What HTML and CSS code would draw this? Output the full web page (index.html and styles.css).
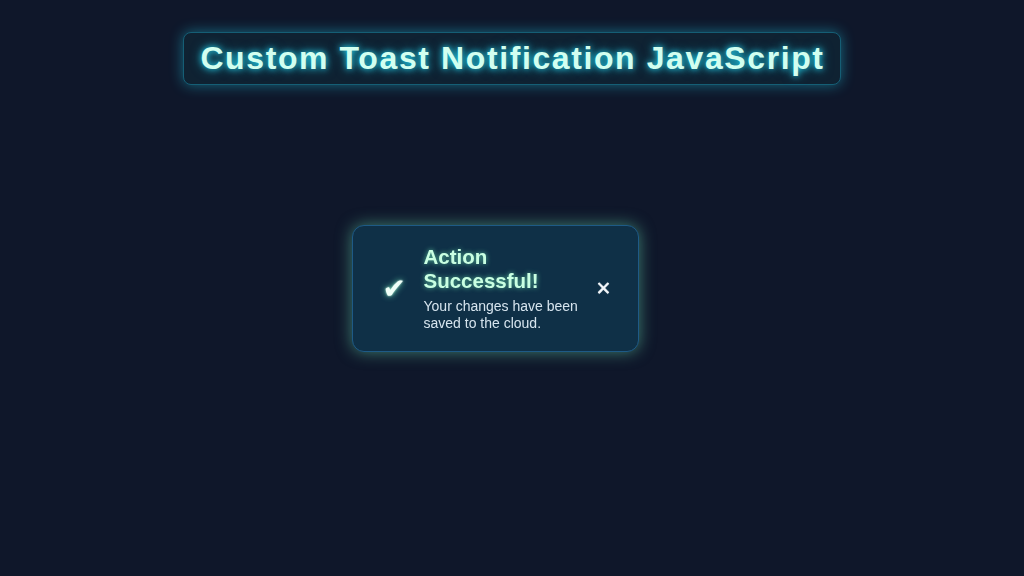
FILE: index.html
```html
<!DOCTYPE html>
<html>
<head>
<meta charset="utf-8">
<link rel="stylesheet" href="styles.css">
</head>
<body>
<header class="page-head">
  <h1 class="title">Custom Toast Notification JavaScript</h1>
</header>
<div class="toast-layer">
  <div class="toast">
    <span class="toast-icon">✔</span>
    <div class="toast-body">
      <div class="toast-title">Action Successful!</div>
      <div class="toast-msg">Your changes have been saved to the cloud.</div>
    </div>
    <span class="toast-close">✕</span>
  </div>
</div>
</body>
</html>
```
FILE: styles.css
```css
html, body {
  margin: 0;
  padding: 0;
}
body {
  background: #0f172a;
  min-height: 100vh;
  font-family: "Liberation Sans", Arial, sans-serif;
}
.page-head {
  display: flex;
  justify-content: center;
  padding-top: 32px;
}
.title {
  margin: 0;
  padding: 0 15px 0 16px;
  height: 53px;
  box-sizing: border-box;
  display: flex;
  align-items: center;
  font-family: "Liberation Sans", Arial, sans-serif;
  font-weight: bold;
  font-size: 32px;
  letter-spacing: 1.6px;
  color: #d2fff0;
  text-shadow: 0 0 6px #22d3ee, 0 0 12px rgba(34, 211, 238, 0.6);
  background: #0f2232;
  border: 1px solid #155e75;
  border-radius: 8px;
  box-shadow: 0 0 14px rgba(34, 211, 238, 0.45);
}
.toast-layer {
  position: fixed;
  inset: 0;
  display: flex;
  align-items: center;
  justify-content: center;
}
.toast {
  width: 287px;
  height: 127px;
  box-sizing: border-box;
  display: flex;
  align-items: center;
  padding: 0 26px 0 30px;
  background: #0f3047;
  border: 1px solid #1e5a86;
  border-radius: 12px;
  box-shadow: 0 0 16px rgba(110, 231, 183, 0.5);
  margin-left: -34px;
}
.toast-icon {
  font-family: "DejaVu Sans", sans-serif;
  font-size: 28px;
  color: #f0fff8;
  text-shadow: 0 0 6px #6ee7b7, 0 0 2px #ffffff;
  width: 24px;
  margin-right: 17px;
  flex: none;
}
.toast-body {
  flex: 1;
}
.toast-title {
  font-weight: bold;
  font-size: 20.5px;
  line-height: 24px;
  color: #c9ffe2;
  text-shadow: 0 0 5px rgba(110, 231, 183, 0.8);
  margin-bottom: 5px;
}
.toast-msg {
  font-size: 14px;
  line-height: 17px;
  color: #d6e4ee;
}
.toast-close {
  font-family: "DejaVu Sans", sans-serif;
  font-weight: bold;
  font-size: 19px;
  color: #f1f5f9;
  text-shadow: 0 0 1px #ffffff;
  margin-left: 8px;
  flex: none;
}
```
